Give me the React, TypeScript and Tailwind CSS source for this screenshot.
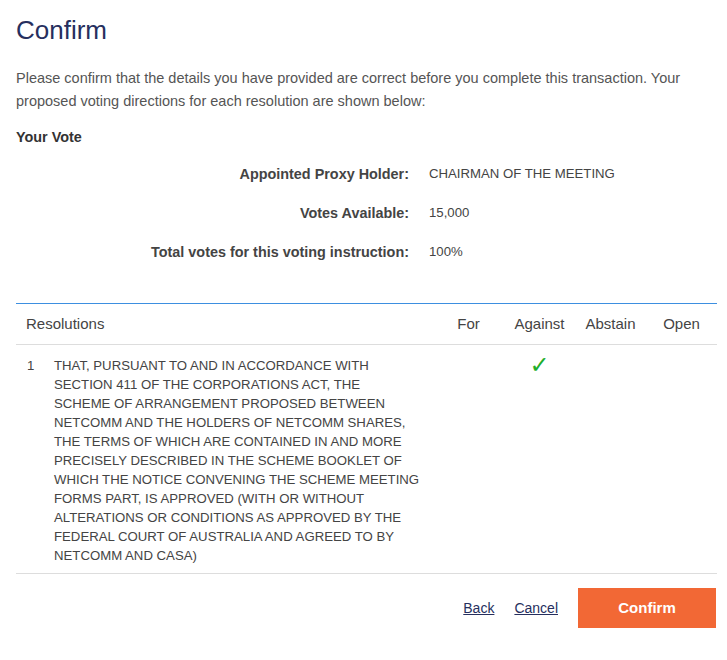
const resolutionLines = [
  "THAT, PURSUANT TO AND IN ACCORDANCE WITH",
  "SECTION 411 OF THE CORPORATIONS ACT, THE",
  "SCHEME OF ARRANGEMENT PROPOSED BETWEEN",
  "NETCOMM AND THE HOLDERS OF NETCOMM SHARES,",
  "THE TERMS OF WHICH ARE CONTAINED IN AND MORE",
  "PRECISELY DESCRIBED IN THE SCHEME BOOKLET OF",
  "WHICH THE NOTICE CONVENING THE SCHEME MEETING",
  "FORMS PART, IS APPROVED (WITH OR WITHOUT",
  "ALTERATIONS OR CONDITIONS AS APPROVED BY THE",
  "FEDERAL COURT OF AUSTRALIA AND AGREED TO BY",
  "NETCOMM AND CASA)",
];

export default function App() {
  const details = [
    { label: "Appointed Proxy Holder:", value: "CHAIRMAN OF THE MEETING" },
    { label: "Votes Available:", value: "15,000" },
    { label: "Total votes for this voting instruction:", value: "100%" },
  ];

  return (
    <div className="min-h-screen bg-white font-['Liberation_Sans',Arial,sans-serif] text-[#444]">
      <div className="pl-4 pr-[10px] pt-[13px]">
        <h1 className="text-[26px] leading-[34px] text-[#262f5e]">Confirm</h1>

        <p className="mt-[20px] text-[14.5px] leading-[23px] text-[#555]">
          Please confirm that the details you have provided are correct before you complete this transaction. Your
          proposed voting directions for each resolution are shown below:
        </p>

        <h2 className="mt-[14px] text-[14.4px] font-bold leading-[20px] text-[#333]">Your Vote</h2>

        <div className="mt-[17px] flex flex-col gap-[19px]">
          {details.map((d) => (
            <div key={d.label} className="grid grid-cols-[393px_1fr] items-center gap-5 leading-[20px]">
              <div className="text-right text-[14.4px] font-bold text-[#444]">{d.label}</div>
              <div className="text-[13.2px] text-[#444]">{d.value}</div>
            </div>
          ))}
        </div>

        <div className="mt-[41px] border-t-[1.5px] border-[#3d8fe0]">
          <div className="grid grid-cols-[1fr_71px_71px_71px_71px] border-b border-[#ddd] py-[11px] text-[15px] leading-[18px] text-[#444]">
            <div className="pl-[10px]">Resolutions</div>
            <div className="text-center">For</div>
            <div className="text-center">Against</div>
            <div className="text-center">Abstain</div>
            <div className="text-center">Open</div>
          </div>

          <div className="grid grid-cols-[1fr_71px_71px_71px_71px] border-b border-[#ddd] pt-[11px] pb-[8px] text-[13.2px] leading-[19px] text-[#444]">
            <div className="flex pl-[11px]">
              <span className="w-[27px] shrink-0">1</span>
              <div>
                {resolutionLines.map((line) => (
                  <div key={line} className="whitespace-nowrap">
                    {line}
                  </div>
                ))}
              </div>
            </div>
            <div />
            <div className="text-center font-['DejaVu_Sans',sans-serif] text-[24px] font-bold leading-[18px] text-[#1fae2c]">
              ✓
            </div>
            <div />
            <div />
          </div>
        </div>

        <div className="mt-[14px] flex items-center justify-end gap-5 pr-px">
          <a href="#" className="text-[14px] text-[#262f5e] underline">
            Back
          </a>
          <a href="#" className="text-[14px] text-[#262f5e] underline">
            Cancel
          </a>
          <button className="h-[40px] w-[138px] bg-[#f26835] text-[15px] font-bold text-white">Confirm</button>
        </div>
      </div>
    </div>
  );
}
